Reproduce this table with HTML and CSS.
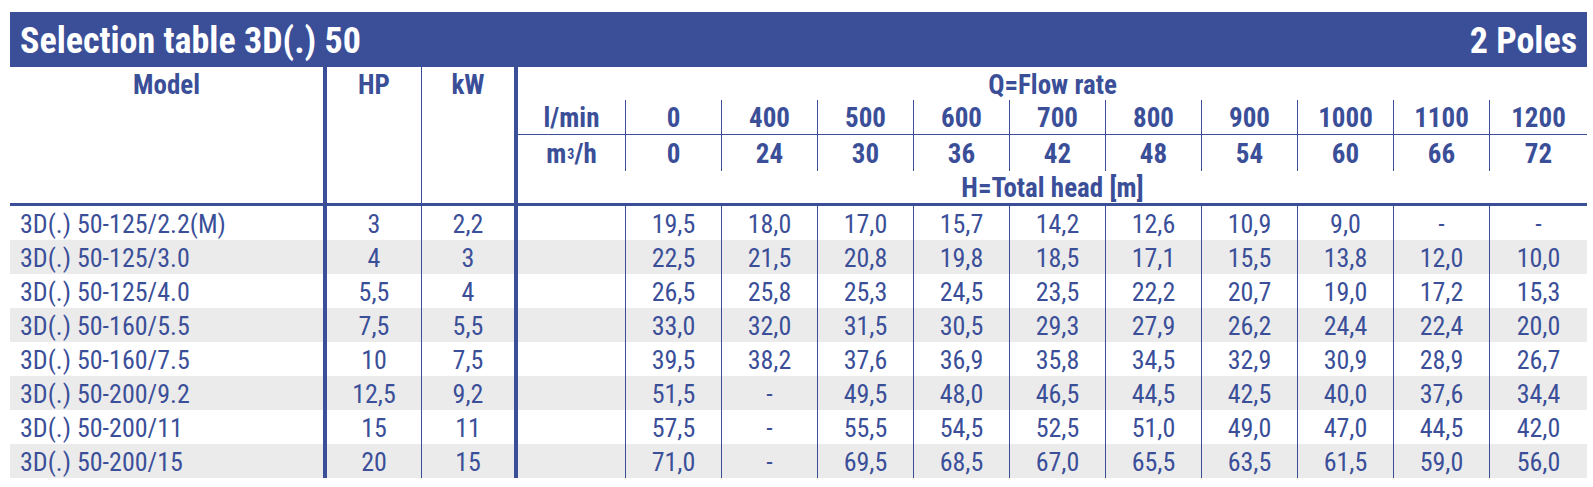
FILE: index.html
```html
<!DOCTYPE html>
<html lang="en">
<head>
<meta charset="utf-8">
<title>Selection table 3D(.) 50</title>
<link rel="stylesheet" href="styles.css">
</head>
<body>
<div class="sheet">
  <div class="title"><span>Selection table 3D(.) 50</span><span>2 Poles</span></div>

  <div class="grid head">
    <div class="hc h-model">Model</div>
    <div class="hc h-hp">HP</div>
    <div class="hc h-kw">kW</div>
    <div class="hc h-q">Q=Flow rate</div>

    <div class="hc r2 unit">l/min</div>
    <div class="hc r2">0</div>
    <div class="hc r2">400</div>
    <div class="hc r2">500</div>
    <div class="hc r2">600</div>
    <div class="hc r2">700</div>
    <div class="hc r2">800</div>
    <div class="hc r2">900</div>
    <div class="hc r2">1000</div>
    <div class="hc r2">1100</div>
    <div class="hc r2 last">1200</div>

    <div class="hc r3 unit">m<sup>3</sup>/h</div>
    <div class="hc r3">0</div>
    <div class="hc r3">24</div>
    <div class="hc r3">30</div>
    <div class="hc r3">36</div>
    <div class="hc r3">42</div>
    <div class="hc r3">48</div>
    <div class="hc r3">54</div>
    <div class="hc r3">60</div>
    <div class="hc r3">66</div>
    <div class="hc r3 last">72</div>

    <div class="hc h-h">H=Total head [m]</div>
  </div>

  <div class="grid row">
    <div class="c model">3D(.) 50-125/2.2(M)</div><div class="c hp">3</div><div class="c kw">2,2</div><div class="c unit"></div>
    <div class="c">19,5</div><div class="c">18,0</div><div class="c">17,0</div><div class="c">15,7</div><div class="c">14,2</div><div class="c">12,6</div><div class="c">10,9</div><div class="c">9,0</div><div class="c">-</div><div class="c last">-</div>
  </div>
  <div class="grid row alt">
    <div class="c model">3D(.) 50-125/3.0</div><div class="c hp">4</div><div class="c kw">3</div><div class="c unit"></div>
    <div class="c">22,5</div><div class="c">21,5</div><div class="c">20,8</div><div class="c">19,8</div><div class="c">18,5</div><div class="c">17,1</div><div class="c">15,5</div><div class="c">13,8</div><div class="c">12,0</div><div class="c last">10,0</div>
  </div>
  <div class="grid row">
    <div class="c model">3D(.) 50-125/4.0</div><div class="c hp">5,5</div><div class="c kw">4</div><div class="c unit"></div>
    <div class="c">26,5</div><div class="c">25,8</div><div class="c">25,3</div><div class="c">24,5</div><div class="c">23,5</div><div class="c">22,2</div><div class="c">20,7</div><div class="c">19,0</div><div class="c">17,2</div><div class="c last">15,3</div>
  </div>
  <div class="grid row alt">
    <div class="c model">3D(.) 50-160/5.5</div><div class="c hp">7,5</div><div class="c kw">5,5</div><div class="c unit"></div>
    <div class="c">33,0</div><div class="c">32,0</div><div class="c">31,5</div><div class="c">30,5</div><div class="c">29,3</div><div class="c">27,9</div><div class="c">26,2</div><div class="c">24,4</div><div class="c">22,4</div><div class="c last">20,0</div>
  </div>
  <div class="grid row">
    <div class="c model">3D(.) 50-160/7.5</div><div class="c hp">10</div><div class="c kw">7,5</div><div class="c unit"></div>
    <div class="c">39,5</div><div class="c">38,2</div><div class="c">37,6</div><div class="c">36,9</div><div class="c">35,8</div><div class="c">34,5</div><div class="c">32,9</div><div class="c">30,9</div><div class="c">28,9</div><div class="c last">26,7</div>
  </div>
  <div class="grid row alt">
    <div class="c model">3D(.) 50-200/9.2</div><div class="c hp">12,5</div><div class="c kw">9,2</div><div class="c unit"></div>
    <div class="c">51,5</div><div class="c">-</div><div class="c">49,5</div><div class="c">48,0</div><div class="c">46,5</div><div class="c">44,5</div><div class="c">42,5</div><div class="c">40,0</div><div class="c">37,6</div><div class="c last">34,4</div>
  </div>
  <div class="grid row">
    <div class="c model">3D(.) 50-200/11</div><div class="c hp">15</div><div class="c kw">11</div><div class="c unit"></div>
    <div class="c">57,5</div><div class="c">-</div><div class="c">55,5</div><div class="c">54,5</div><div class="c">52,5</div><div class="c">51,0</div><div class="c">49,0</div><div class="c">47,0</div><div class="c">44,5</div><div class="c last">42,0</div>
  </div>
  <div class="grid row alt">
    <div class="c model">3D(.) 50-200/15</div><div class="c hp">20</div><div class="c kw">15</div><div class="c unit"></div>
    <div class="c">71,0</div><div class="c">-</div><div class="c">69,5</div><div class="c">68,5</div><div class="c">67,0</div><div class="c">65,5</div><div class="c">63,5</div><div class="c">61,5</div><div class="c">59,0</div><div class="c last">56,0</div>
  </div>
</div>
</body>
</html>
```

FILE: styles.css
```css
* { box-sizing: border-box; }

body {
  margin: 0;
  background: #ffffff;
  color: #3b4f99;
  font-family: "Roboto", "Liberation Sans", sans-serif;
  font-stretch: 75%;
}

.sheet {
  margin: 12px 0 0 10px;
  width: 1577px;
}

.title {
  display: flex;
  justify-content: space-between;
  align-items: center;
  height: 55px;
  padding: 2px 10px 0 10px;
  background: #3b4f99;
  color: #ffffff;
  font-weight: bold;
  font-size: 36px;
  line-height: 1;
}

.grid {
  display: grid;
  grid-template-columns: 317px 95px 96px 108px repeat(9, 96px) 97px;
}

.head {
  grid-template-rows: 33px 35px 36px 32px;
  border-bottom: 3px solid #3b4f99;
  font-weight: bold;
  font-size: 27px;
}

.hc {
  display: flex;
  justify-content: center;
  align-items: center;
  white-space: nowrap;
}

.h-model {
  grid-column: 1;
  grid-row: 1 / 5;
  align-items: flex-start;
  padding-top: 2px;
  border-right: 4px solid #3b4f99;
}

.h-hp {
  grid-column: 2;
  grid-row: 1 / 5;
  align-items: flex-start;
  padding-top: 2px;
  border-right: 1px solid #3b4f99;
}

.h-kw {
  grid-column: 3;
  grid-row: 1 / 5;
  align-items: flex-start;
  padding-top: 2px;
  border-right: 4px solid #3b4f99;
}

.h-q {
  grid-column: 4 / 15;
  grid-row: 1;
  padding-top: 2px;
}

.r2 {
  grid-row: 2;
  border-right: 1px solid #3b4f99;
  border-bottom: 1px solid #3b4f99;
  padding-top: 2px;
}

.r3 {
  grid-row: 3;
  border-right: 1px solid #3b4f99;
  padding-top: 1px;
}

.r2.last, .r3.last { border-right: 0; }

.h-h {
  grid-column: 4 / 15;
  grid-row: 4;
  padding-top: 2px;
}

sup {
  font-size: 14px;
  line-height: 0;
  vertical-align: 11px;
  margin-left: 1px;
}

.row {
  height: 34px;
  font-size: 26px;
}

.row.alt { background: #ebebeb; }

.c {
  height: 34px;
  line-height: 32px;
  padding-top: 2px;
  text-align: center;
  white-space: nowrap;
  border-right: 1px solid #3b4f99;
}

.c.last { border-right: 0; }

.c.model {
  text-align: left;
  padding-left: 10px;
  border-right: 4px solid #3b4f99;
}

.c.kw { border-right: 4px solid #3b4f99; }
```
